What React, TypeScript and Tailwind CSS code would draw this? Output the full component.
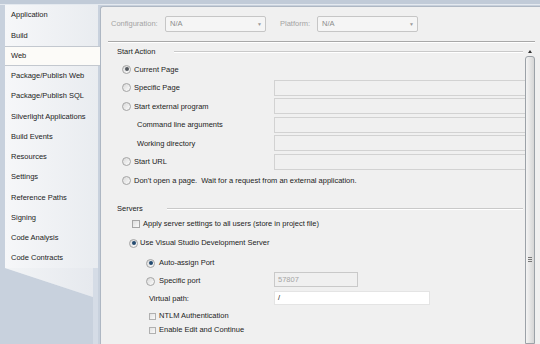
import React from "react";

const tabs = [
  "Application",
  "Build",
  "Web",
  "Package/Publish Web",
  "Package/Publish SQL",
  "Silverlight Applications",
  "Build Events",
  "Resources",
  "Settings",
  "Reference Paths",
  "Signing",
  "Code Analysis",
  "Code Contracts",
];

function Radio({ checked, dim }: { checked?: boolean; dim?: boolean }) {
  return (
    <span className="w-[9px] h-[9px] shrink-0 rounded-full border border-[#a4a4a4] bg-linear-to-br from-[#d9d9d9] to-[#fcfcfc] flex items-center justify-center">
      {checked && (
        <span
          className={
            dim
              ? "w-[4px] h-[4px] rounded-full bg-[#555a60]"
              : "w-[4px] h-[4px] rounded-full bg-[#234a70]"
          }
        />
      )}
    </span>
  );
}

function Check({ size = 8 }: { size?: number }) {
  return (
    <span
      className={
        size === 8
          ? "w-[8px] h-[8px] shrink-0 border border-[#a6a6a6] bg-linear-to-br from-[#dedede] to-[#fafafa]"
          : "w-[7px] h-[7px] shrink-0 border border-[#b0b0b0] bg-linear-to-br from-[#e2e2e2] to-[#fafafa]"
      }
    />
  );
}

function Box() {
  return <div className="w-[260px] h-[16px] shrink-0 border border-[#d2d2d2] bg-[#f0f0f0]" />;
}

function Select() {
  return (
    <div className="w-[101px] h-[16px] flex items-center justify-between border border-[#c6c6c6] rounded-[2px] bg-[#f5f5f5] pl-[4px] pr-[3px] text-[#8c8c8c]">
      <span>N/A</span>
      <span className="text-[5px] text-[#9a9a9a]">▼</span>
    </div>
  );
}

function GroupHead({ label, gap }: { label: string; gap: string }) {
  return (
    <div className="flex items-center pl-[9px] pr-[2px] h-full">
      <span>{label}</span>
      <div className={`flex-1 ${gap} h-[2px] border-t border-[#c9c9c9] border-b border-b-white`} />
    </div>
  );
}

export default function App() {
  return (
    <div className="w-[540px] h-[344px] overflow-hidden bg-[#c8d1dd] font-['Liberation_Sans',Arial,sans-serif] text-[7.5px] leading-none text-[#1c1c1c] flex flex-col">
      <div className="h-[5px] shrink-0 bg-[#c1cbd8] border-b border-[#e4e9ef]" />
      <div className="flex flex-1 min-h-0">
        {/* sidebar */}
        <div className="ml-[5px] w-[93px] shrink-0 flex flex-col bg-[#d5dce6] [clip-path:polygon(0_0,110px_0,110px_100%,88px_100%,88px_292px,0_263px)]">
          <div className="flex flex-col bg-linear-to-r from-[#f6f7f9] to-[#e9ecf0]">
            {tabs.map((t) =>
              t === "Web" ? (
                <div
                  key={t}
                  className="h-[20.25px] -ml-[3px] w-[98px] pl-[9px] flex items-center bg-[#fcfbf8] border-y border-[#c3c8cf]"
                >
                  {t}
                </div>
              ) : (
                <div key={t} className="h-[20.25px] pl-[6px] flex items-center">
                  {t}
                </div>
              )
            )}
          </div>
          <div className="h-[40px] w-[88px] bg-linear-to-r from-[#f2f4f6] to-[#e6e9ee]" />
        </div>

        {/* main panel */}
        <div className="ml-[2px] mt-px flex-1 min-w-0 flex flex-col bg-[#f0f0f0] border-l border-t border-[#aeb7c3] rounded-tl-[3px]">
          <div className="mt-[9px] h-[16px] flex items-center pl-[10px] shrink-0">
            <span className="w-[54px] text-[#a3a3a3]">Configuration:</span>
            <Select />
            <span className="ml-[14px] w-[37px] text-[#a3a3a3]">Platform:</span>
            <Select />
          </div>
          <div className="mt-[9px] ml-[7px] mr-[5px] h-[2px] shrink-0 border-t border-[#a8a8a8] border-b border-b-white" />

          <div className="flex flex-1 min-h-0 ml-[7px] mr-[5px]">
            <div className="flex-1 min-w-0 overflow-hidden flex flex-col">
              <div className="mt-px h-[16px] shrink-0">
                <GroupHead label="Start Action" gap="ml-[19px]" />
              </div>

              <div className="h-[18.5px] flex items-center pl-[14px]">
                <Radio checked dim />
                <span className="ml-[3px]">Current Page</span>
              </div>
              <div className="h-[18.5px] flex items-center">
                <div className="w-[166px] shrink-0 flex items-center pl-[14px]">
                  <Radio />
                  <span className="ml-[3px]">Specific Page</span>
                </div>
                <Box />
              </div>
              <div className="h-[18.5px] flex items-center">
                <div className="w-[166px] shrink-0 flex items-center pl-[14px]">
                  <Radio />
                  <span className="ml-[3px]">Start external program</span>
                </div>
                <Box />
              </div>
              <div className="h-[18.5px] flex items-center">
                <div className="w-[166px] shrink-0 pl-[29px]">Command line arguments</div>
                <Box />
              </div>
              <div className="h-[18.5px] flex items-center">
                <div className="w-[166px] shrink-0 pl-[29px]">Working directory</div>
                <Box />
              </div>
              <div className="h-[18.5px] flex items-center">
                <div className="w-[166px] shrink-0 flex items-center pl-[14px]">
                  <Radio />
                  <span className="ml-[3px]">Start URL</span>
                </div>
                <Box />
              </div>
              <div className="h-[18.5px] flex items-center pl-[14px]">
                <Radio />
                <span className="ml-[3px] whitespace-pre">
                  Don't open a page.  Wait for a request from an external application.
                </span>
              </div>

              <div className="mt-[12.5px] h-[14px] shrink-0">
                <GroupHead label="Servers" gap="ml-[24px]" />
              </div>
              <div className="h-[16px] shrink-0 flex items-center pl-[24px]">
                <Check />
                <span className="ml-[3px]">Apply server settings to all users (store in project file)</span>
              </div>
              <div className="h-[22px] shrink-0 flex items-center pl-[21px]">
                <Radio checked />
                <span className="ml-[2px]">Use Visual Studio Development Server</span>
              </div>
              <div className="h-[18px] shrink-0 flex items-center pl-[38px]">
                <Radio checked />
                <span className="ml-[4px]">Auto-assign Port</span>
              </div>
              <div className="h-[18px] shrink-0 flex items-center">
                <div className="w-[166px] shrink-0 flex items-center pl-[38px]">
                  <Radio />
                  <span className="ml-[4px]">Specific port</span>
                </div>
                <div className="w-[84px] h-[15px] -mt-[3px] border border-[#c9c9c9] bg-[#f0f0f0] flex items-center pl-[3px] text-[#a5a5a5]">
                  57807
                </div>
              </div>
              <div className="h-[18px] shrink-0 flex items-center">
                <div className="w-[166px] shrink-0 pl-[41px]">Virtual path:</div>
                <div className="w-[156px] h-[14px] -mt-[3px] border border-[#e4e4e4] bg-white flex items-center pl-[3px]">
                  /
                </div>
              </div>
              <div className="h-[16px] shrink-0 flex items-center pl-[41px]">
                <Check size={7} />
                <span className="ml-[3px]">NTLM Authentication</span>
              </div>
              <div className="h-[12px] shrink-0 flex items-center pl-[41px]">
                <Check size={7} />
                <span className="ml-[3px]">Enable Edit and Continue</span>
              </div>
            </div>

            {/* scrollbar */}
            <div className="w-[10px] shrink-0 flex flex-col">
              <div className="h-[13px] shrink-0 flex items-end justify-center pb-[3px]">
                <span className="w-0 h-0 border-x-[2.5px] border-x-transparent border-b-[3px] border-b-[#333]" />
              </div>
              <div className="flex-1 border border-[#9ca2a8] rounded-t-[3px] bg-linear-to-r from-[#f4f4f4] to-[#d6d6d6] flex flex-col items-center">
                <div className="mt-[200px] flex flex-col gap-[1px]">
                  <span className="w-[4px] h-px bg-[#777]" />
                  <span className="w-[4px] h-px bg-[#777]" />
                  <span className="w-[4px] h-px bg-[#777]" />
                </div>
              </div>
            </div>
          </div>
        </div>
      </div>
    </div>
  );
}
